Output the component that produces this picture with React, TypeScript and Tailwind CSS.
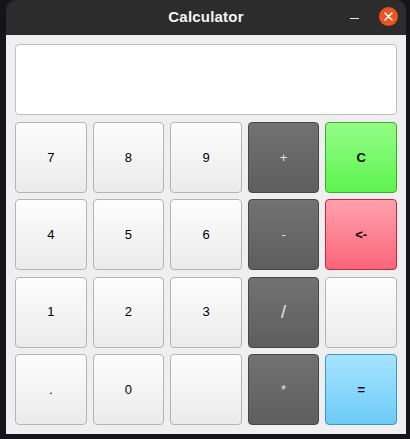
import React from 'react';

type Kind = 'plain' | 'op' | 'clear' | 'back' | 'equal';

interface Key {
    label: string;
    kind: Kind;
}

const keys: Key[] = [
    { label: '7', kind: 'plain' }, { label: '8', kind: 'plain' }, { label: '9', kind: 'plain' }, { label: '+', kind: 'op' }, { label: 'C', kind: 'clear' },
    { label: '4', kind: 'plain' }, { label: '5', kind: 'plain' }, { label: '6', kind: 'plain' }, { label: '-', kind: 'op' }, { label: '<-', kind: 'back' },
    { label: '1', kind: 'plain' }, { label: '2', kind: 'plain' }, { label: '3', kind: 'plain' }, { label: '/', kind: 'op' }, { label: '', kind: 'plain' },
    { label: '.', kind: 'plain' }, { label: '0', kind: 'plain' }, { label: '', kind: 'plain' }, { label: '*', kind: 'op' }, { label: '=', kind: 'equal' },
];

const styles: Record<Kind, string> = {
    plain: 'bg-gradient-to-b from-[#fdfdfd] to-[#ebebeb] border-[#b4b4b4] text-black',
    op: 'bg-gradient-to-b from-[#727272] to-[#5e5e5e] border-[#474747] text-[#e6e6e6]',
    clear: 'bg-gradient-to-b from-[#92fd84] to-[#5cf44e] border-[#3aab2e] text-black font-bold',
    back: 'bg-gradient-to-b from-[#ffa0ac] to-[#fa6479] border-[#c0283e] text-black font-bold',
    equal: 'bg-gradient-to-b from-[#a6e3ff] to-[#6bcbf8] border-[#3a98c8] text-black font-bold',
};

const App: React.FC = () => {
    return (
        <div className="w-[410px] h-[439px] bg-[#15141b] pl-[6px] pr-[4px]" style={{ fontFamily: '"Liberation Sans", Arial, sans-serif' }}>
            <div className="w-[400px] flex flex-col">
                {/* Title bar */}
                <div className="h-[35px] bg-[#2c2c2c] rounded-t-[10px] relative flex items-center justify-center">
                    <span className="text-[15px] font-bold text-[#f4f4f4] tracking-[0.2px]">Calculator</span>
                    <div className="absolute left-[344px] top-[18px] w-[9px] h-[1px] bg-[#e8e8e8]" />
                    <div className="absolute left-[373px] top-[7px] w-[19px] h-[19px] rounded-full bg-[#e95420] flex items-center justify-center">
                        <svg width="9" height="9" viewBox="0 0 9 9">
                            <path d="M1 1 L8 8 M8 1 L1 8" stroke="#ffffff" strokeWidth="1.5" strokeLinecap="round" />
                        </svg>
                    </div>
                </div>

                {/* Body */}
                <div className="h-[399px] bg-[#efefef] p-[9px] flex flex-col gap-[7px]">
                    <div className="h-[71px] bg-white border border-[#bdbdbd] rounded-[4px]" />
                    <div className="grid grid-cols-5 grid-rows-4 gap-x-[6px] gap-y-[6.5px] flex-1">
                        {keys.map((k, i) => (
                            <div
                                key={i}
                                className={`rounded-[4px] border flex items-center justify-center ${k.label === '/' ? 'text-[18px]' : 'text-[13px]'} ${styles[k.kind]}`}
                            >
                                {k.label}
                            </div>
                        ))}
                    </div>
                </div>
            </div>
        </div>
    );
};

export default App;
